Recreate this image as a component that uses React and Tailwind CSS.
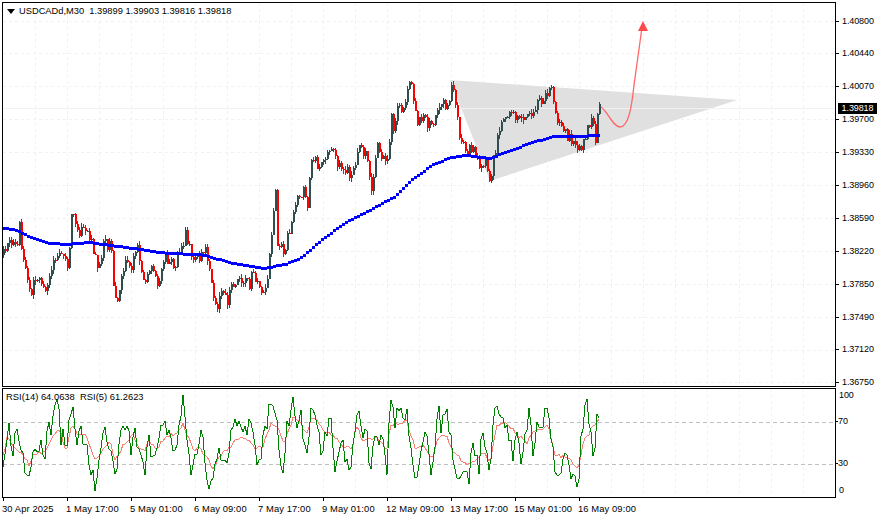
const mapZ = (pts, ox, oy) => pts.map(([u, v]) => [ox + u / 3, oy + v / 3]);
const sortKeys = (pts) => [...pts].sort((a, b) => a[0] - b[0]);

const interp = (pts, x) => {
  if (x <= pts[0][0]) return pts[0][1];
  for (let i = 1; i < pts.length; i++) {
    if (x <= pts[i][0]) {
      const [a, b] = pts[i - 1];
      const [c, d] = pts[i];
      return b + ((d - b) * (x - a)) / (c - a || 1);
    }
  }
  return pts[pts.length - 1][1];
};

const rng = (seed) => () => {
  seed = (seed * 16807) % 2147483647;
  return seed / 2147483647;
};

const priceKeys = sortKeys([
  ...mapZ([[10,165],[20,125],[40,130],[50,150],[57,75],[65,165],[75,200],[85,275],[92,295],[100,235],[120,235],[135,255],[150,225],[170,165],[190,165],[200,225],[212,60],[225,60],[232,110],[250,75],[270,110],[280,165],[300,205],[310,135],[330,130],[340,260],[350,320],[360,235],[380,180],[395,215],[400,150],[410,145],[420,210],[440,240],[450,175],[465,245],[480,240],[490,170],[520,190],[545,155],[555,100],[575,170],[600,185],[610,135],[625,205],[640,290],[650,345],[660,260],[680,310],[690,270],[710,230],[745,260],[755,210],[785,285],[800,230],[810,120],[830,115],[850,170]], 0, 200),
  ...mapZ([[45,370],[100,410],[130,350],[140,415],[155,260],[175,290],[215,240],[240,290],[275,310],[298,225],[320,260],[330,370],[350,235],[385,290],[390,130],[400,190],[415,105],[430,110],[450,35],[460,100],[472,160],[480,130],[515,180],[545,95],[560,130]], 260, 70),
  ...mapZ([[33,215],[60,400],[100,430],[120,465],[135,440],[150,510],[165,410],[185,320],[215,310],[250,345],[285,290],[325,240],[335,250],[350,340],[415,420],[455,330],[465,380],[478,270],[482,295]], 440, 10),
]);

const r = rng(4711);
const candles = [];
let prev = interp(priceKeys, 3);
for (let x = 3; x <= 600; x += 2) {
  const c = interp(priceKeys, x) + (r() - 0.5) * 13;
  const o = prev;
  candles.push({
    x,
    top: Math.round(Math.min(o, c)),
    bot: Math.round(Math.max(o, c)),
    h: Math.round(Math.min(o, c) - r() * 4),
    l: Math.round(Math.max(o, c) + r() * 4),
    color: c <= o ? "#2f4f4f" : "#ff0000",
  });
  prev = c;
}

const maPts = [[3,228],[15,229],[30,237],[50,243],[67,244],[90,242],[110,245],[133,248],[167,253],[200,254],[233,263],[263,268],[285,264],[300,258],[320,241],[345,222],[373,208],[395,196],[413,178],[435,163],[452,157],[465,155],[490,158],[510,150],[530,143],[552,136],[575,136],[600,135]];
const maBlocks = [];
for (let x = 3; x <= 598; x += 3) {
  maBlocks.push({ x, y: Math.round(interp(maPts, x + 1)) });
}

const greenKeys = sortKeys([
  ...mapZ([[10,275],[25,100],[38,190],[50,100],[55,180],[70,235],[88,292],[97,160],[105,215],[118,165],[135,215],[140,125],[155,150],[162,85],[175,65],[185,180],[192,135],[198,245],[210,95],[222,72],[232,185],[240,145],[255,165],[268,240],[283,300],[297,240],[312,112],[325,185],[345,290],[372,100],[385,120],[390,215],[405,115],[420,230],[435,260]], 0, 385),
  ...mapZ([[445,145],[460,250],[480,150],[495,140],[510,170],[525,205],[550,65],[560,150],[575,285],[590,200],[605,130],[620,290],[630,325],[645,270],[655,190],[680,250],[695,155],[710,115],[730,180],[750,100],[775,265],[790,190],[805,90],[815,80],[830,130],[848,270],[860,150]], 0, 380),
  ...mapZ([[8,55],[20,115],[30,75],[48,205],[65,60],[75,85],[88,175],[97,200],[120,90],[135,250],[150,155],[165,220],[185,255],[200,60],[218,170],[232,125],[238,270],[258,135],[278,185],[292,245],[300,65],[315,110],[325,85],[350,80],[375,275],[390,230],[405,130],[425,290],[445,80],[455,130],[470,85],[490,230],[515,285],[535,290],[548,170],[565,260],[580,130],[598,270],[610,100],[628,65],[648,115],[670,205],[680,140],[695,225],[716,90],[730,195],[740,100],[750,150],[775,65],[795,240],[810,265],[825,220],[865,312],[875,130],[888,55],[900,110],[912,230],[925,65],[932,135]], 290, 385),
]);
const salmonKeys = sortKeys([
  ...mapZ([[10,210],[22,155],[40,180],[62,200],[88,238],[100,205],[130,200],[150,175],[175,125],[185,150],[198,200],[215,115],[235,150],[255,145],[272,195],[285,225],[298,210],[312,190],[330,170],[345,230],[372,175],[400,150],[415,190],[435,195]], 0, 385),
  ...mapZ([[445,175],[470,210],[490,175],[510,165],[530,165],[550,130],[565,170],[580,210],[600,205],[625,240],[640,265],[660,225],[690,200],[710,170],[740,180],[770,205],[790,200],[810,135],[830,135],[850,190]], 0, 380),
  ...mapZ([[0,130],[10,95],[30,110],[48,150],[65,95],[80,105],[100,135],[130,150],[160,185],[185,195],[200,120],[218,165],[260,155],[290,195],[300,120],[350,110],[375,190],[405,185],[425,220],[445,160],[470,150],[490,200],[520,230],[540,240],[580,200],[600,240],[620,125],[650,115],[680,145],[710,175],[740,130],[775,125],[795,210],[830,215],[865,250],[880,170],[900,140],[925,100],[932,110]], 290, 385),
]);
const r2 = rng(991);
const series = (keys, amp) => {
  const out = [];
  for (let x = 3; x <= 600; x += 2) {
    const y = interp(keys, x) + (r2() - 0.5) * amp;
    out.push(`${x},${Math.max(390, Math.min(495, y)).toFixed(0)}`);
  }
  return out.join(" ");
};
const greenLine = series(greenKeys, 20);
const salmonLine = series(salmonKeys, 4);

const priceLabels = ["1.40800","1.40440","1.40070","1.39700","1.39330","1.38960","1.38590","1.38220","1.37850","1.37490","1.37120","1.36750"];
const timeLabels = ["30 Apr 2025","1 May 17:00","5 May 01:00","6 May 09:00","7 May 17:00","9 May 01:00","12 May 09:00","13 May 17:00","15 May 01:00","16 May 09:00","","","",""];
const vGrid = Array.from({ length: 26 }, (_, i) => 3 + 32 * (i + 1));
const hGrid = priceLabels.map((_, i) => 20.5 + i * 32.9);

const font = { fontFamily: '"Liberation Sans", Arial, sans-serif' };

function VGrid({ y1, y2 }) {
  return vGrid.map((x) => (
    <line key={x} x1={x + 0.5} x2={x + 0.5} y1={y1} y2={y2} stroke="#f1f1f1" strokeDasharray="3 3" />
  ));
}

export default function App() {
  return (
    <div className="flex h-[518px] w-[881px] flex-col overflow-hidden bg-white pt-[2px] text-[9.4px] leading-[11px] text-black" style={font}>
      <div className="flex h-[385px] shrink-0">
        <div className="relative ml-[2px] h-[385px] w-[834px] shrink-0 border border-black">
          <svg width="832" height="383" viewBox="3 3 832 383" className="block">
            <VGrid y1={3} y2={386} />
            {hGrid.map((y) => (
              <line key={y} x1={3} x2={835} y1={Math.round(y) + 0.5} y2={Math.round(y) + 0.5} stroke="#f1f1f1" strokeDasharray="3 3" />
            ))}
            <polygon points="450,80 737,100 490,181" fill="#e0e0e0" />
            <line x1={3} x2={835} y1={108.5} y2={108.5} stroke="#f2f2f2" />
            {candles.map((k) => (
              <g key={k.x} fill={k.color}>
                <rect x={k.x} y={k.h} width={1} height={Math.max(1, k.l - k.h)} />
                <rect x={k.x - 0.5} y={k.top} width={2} height={Math.max(1, k.bot - k.top)} shapeRendering="crispEdges" />
              </g>
            ))}
            {maBlocks.map((b) => (
              <rect key={b.x} x={b.x} y={b.y - 1} width={3} height={3} fill="#0000ff" />
            ))}
            <path d="M601 107C608 112 613 127 620 127C629 127 632 104 634 85L641.5 31" fill="none" stroke="#ff6666" strokeWidth="1.3" />
            <polygon points="643,21 638,31 648,31" fill="#ff4a4a" />
          </svg>
          <div className="absolute left-[4px] top-[3px] flex items-center gap-[4px]">
            <svg width="8" height="5" viewBox="0 0 8 5"><polygon points="0,0 8,0 4,5" fill="#000" /></svg>
            <span className="whitespace-pre text-[9.3px]">USDCADd,M30  1.39899 1.39903 1.39816 1.39818</span>
          </div>
        </div>
        <div className="relative flex flex-col gap-[21.9px] pt-[13.5px]">
          {priceLabels.map((p) => (
            <div key={p} className="flex h-[11px] shrink-0 items-center">
              <span className="h-px w-[3px] bg-black" />
              <span className="ml-[3px] text-[9px] tracking-[-0.1px]">{p}</span>
            </div>
          ))}
          <div className="absolute left-[2px] top-[101px] flex h-[11px] w-[39px] items-center justify-center bg-black text-[9px] tracking-[-0.1px] text-white">1.39818</div>
        </div>
      </div>

      <div className="mt-[1px] flex h-[110px] shrink-0">
        <div className="relative ml-[2px] h-[110px] w-[834px] shrink-0 border border-black">
          <svg width="832" height="108" viewBox="3 389 832 108" className="block">
            <VGrid y1={389} y2={497} />
            <line x1={3} x2={835} y1={422.5} y2={422.5} stroke="#c0c0c0" strokeDasharray="4 3" />
            <line x1={3} x2={835} y1={464.5} y2={464.5} stroke="#c0c0c0" strokeDasharray="4 3" />
            <polyline points={salmonLine} fill="none" stroke="#fa8072" strokeWidth="1" shapeRendering="crispEdges" />
            <polyline points={greenLine} fill="none" stroke="#008000" strokeWidth="1" shapeRendering="crispEdges" />
          </svg>
          <span className="absolute left-[3px] top-[2px] whitespace-pre">RSI(14) 64.0638  RSI(5) 61.2623</span>
        </div>
        <div className="flex h-[110px] flex-col text-[9px] tracking-[-0.1px]">
          <span className="mt-[2px] ml-[3px] h-[11px]">100</span>
          <div className="mt-[15px] flex h-[11px] items-center"><span className="h-px w-[2px] bg-black" />70</div>
          <div className="mt-[31px] flex h-[11px] items-center"><span className="h-px w-[2px] bg-black" />30</div>
          <span className="mt-[16px] ml-[3px] h-[11px]">0</span>
        </div>
      </div>

      <div className="ml-[3px] grid grid-cols-[repeat(14,64px)]">
        {timeLabels.map((t, i) => (
          <div key={i} className="flex flex-col items-start">
            {t && <span className="h-[3px] w-px bg-black" />}
            {t && <span className="-ml-[1px] mt-[2px] whitespace-nowrap tracking-[0.1px]">{t}</span>}
          </div>
        ))}
      </div>
    </div>
  );
}
